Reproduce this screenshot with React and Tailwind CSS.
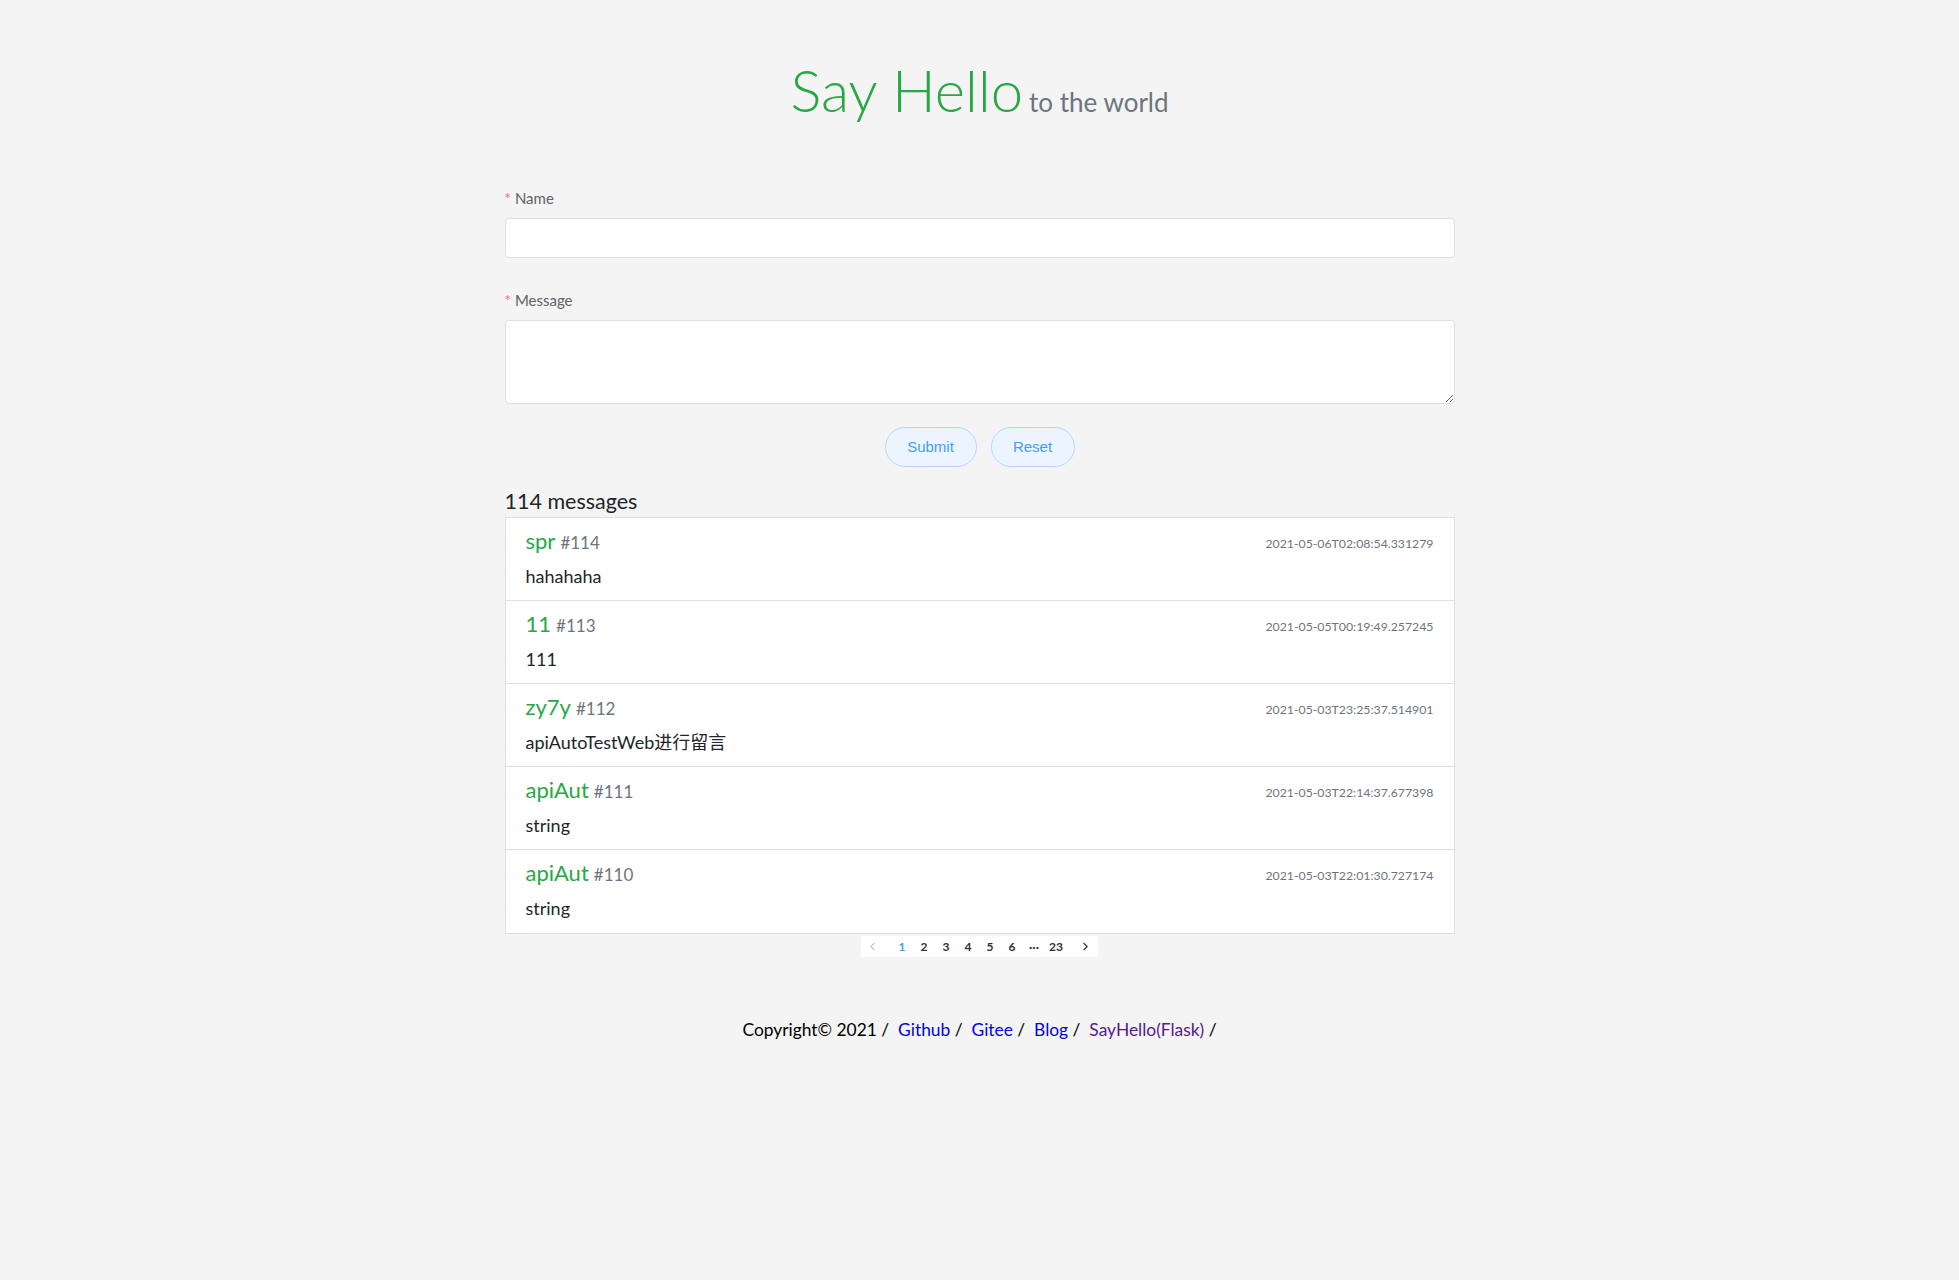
import { ChevronLeft, ChevronRight } from "lucide-react";

const messages = [
  { id: 114, name: "spr", body: "hahahaha", time: "2021-05-06T02:08:54.331279" },
  { id: 113, name: "11", body: "111", time: "2021-05-05T00:19:49.257245" },
  { id: 112, name: "zy7y", body: "apiAutoTestWeb进行留言", time: "2021-05-03T23:25:37.514901" },
  { id: 111, name: "apiAut", body: "string", time: "2021-05-03T22:14:37.677398" },
  { id: 110, name: "apiAut", body: "string", time: "2021-05-03T22:01:30.727174" },
];

const pages = ["1", "2", "3", "4", "5", "6", "···", "23"];

function Label({ children }) {
  return (
    <div className="h-[20px] leading-[20px] text-[15px] text-[#606266] mb-[10px]">
      <span className="text-[#f56c6c] mr-[4px]">*</span>
      {children}
    </div>
  );
}

export default function App() {
  return (
    <div
      className="min-h-screen bg-[#f4f4f4] text-[#212529]"
      style={{ fontFamily: 'Lato, "Noto Sans CJK SC", sans-serif' }}
    >
      <div className="pt-[54px] flex justify-center items-baseline">
        <h1 className="text-[58px] leading-[72px] font-light text-[#28a745]">Say Hello</h1>
        <span className="ml-[6px] text-[26px] text-[#6c757d]">to the world</span>
      </div>

      <div className="mx-auto w-[950px] mt-[62px]">
        <Label>Name</Label>
        <input className="block w-full h-[40px] bg-white border border-[#dcdfe6] rounded-[4px] px-3 outline-none" />

        <div className="mt-[32px]">
          <Label>Message</Label>
          <textarea className="block w-full h-[84px] bg-white border border-[#dcdfe6] rounded-[4px] px-3 py-2 outline-none resize-y" />
        </div>

        <div className="mt-[23px] flex justify-center gap-[14px]" style={{ fontFamily: '"Liberation Sans", Arial, sans-serif' }}>
          <button className="w-[92px] h-[40px] rounded-full bg-[#ecf5ff] border border-[#b3d8ff] text-[#409eff] text-[15px]">
            Submit
          </button>
          <button className="w-[84px] h-[40px] rounded-full bg-[#ecf5ff] border border-[#b3d8ff] text-[#409eff] text-[15px]">
            Reset
          </button>
        </div>

        <h2 className="mt-[22px] h-[24px] leading-[24px] text-[21.5px] text-[#212529]">114 messages</h2>

        <div className="mt-[4px] bg-white border border-[#dfdfdf] divide-y divide-[#dfdfdf]">
          {messages.map((m) => (
            <div key={m.id} className="h-[83px] pl-[20px] pr-[17px] pt-[6px]">
              <div className="flex items-center justify-between h-[32px]">
                <div className="flex items-baseline">
                  <span className="text-[22px] text-[#28a745]">{m.name}</span>
                  <span className="ml-[5px] text-[17px] text-[#6c757d]">#{m.id}</span>
                </div>
                <span className="mt-[9px] text-[12.3px] text-[#6c757d] mr-[3px]">{m.time}</span>
              </div>
              <div className="mt-[8px] h-[24px] leading-[24px] text-[18px]">{m.body}</div>
            </div>
          ))}
        </div>

        <div className="mt-[2px] flex justify-center">
          <div className="flex h-[21px] items-center bg-white rounded-[2px] text-[12px] font-bold text-[#303133]">
            <div className="w-[30px] flex justify-start pl-[5px] text-[#c0c4cc]">
              <ChevronLeft size={13} strokeWidth={2} />
            </div>
            {pages.map((p) => (
              <div key={p} className={`w-[22px] text-center ${p === "1" ? "text-[#409eff]" : ""}`}>
                {p}
              </div>
            ))}
            <div className="w-[31px] flex justify-end pr-[6px]">
              <ChevronRight size={13} strokeWidth={2} />
            </div>
          </div>
        </div>
      </div>

      <div className="mt-[61px] text-center text-[17.4px] leading-[24px] text-black">
        Copyright© 2021 /&nbsp; <a href="#" className="text-[#0000ee]">Github</a> /&nbsp;{" "}
        <a href="#" className="text-[#0000ee]">Gitee</a> /&nbsp; <a href="#" className="text-[#0000ee]">Blog</a> /&nbsp;{" "}
        <a href="#" className="text-[#551a8b]">SayHello(Flask)</a> /
      </div>
    </div>
  );
}
